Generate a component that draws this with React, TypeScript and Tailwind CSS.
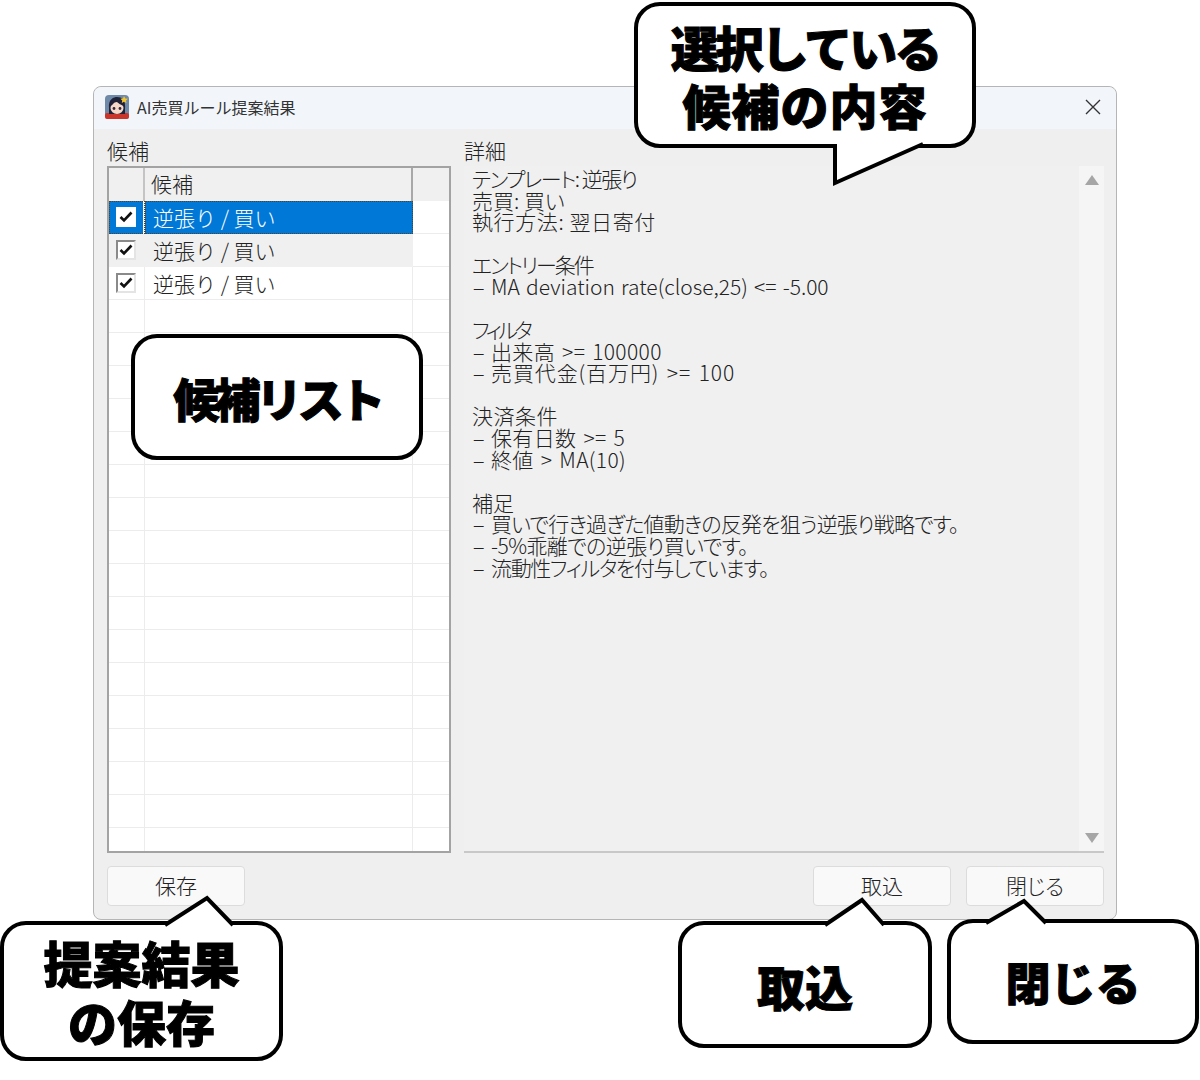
import React from "react";

const sans = "font-['Noto_Sans_CJK_JP','Noto_Sans',sans-serif]";
const palt = "[font-feature-settings:'palt']";

const detail: { t: string; c?: string }[] = [
  { t: "テンプレート: 逆張り", c: "tracking-[-1.5px]" },
  { t: "売買: 買い" },
  { t: "執行方法: 翌日寄付", c: "tracking-[0.6px]" },
  { t: "" },
  { t: "エントリー条件", c: "tracking-[-2px]" },
  { t: "- MA deviation rate(close,25) <= -5.00", c: "[word-spacing:1.5px]" },
  { t: "" },
  { t: "フィルタ", c: "tracking-[-3.5px]" },
  { t: "- 出来高 >= 100000", c: "tracking-[0.35px] [word-spacing:2px]" },
  { t: "- 売買代金(百万円) >= 100", c: "tracking-[0.9px] [word-spacing:2px]" },
  { t: "" },
  { t: "決済条件", c: "tracking-[0.5px]" },
  { t: "- 保有日数 >= 5", c: "tracking-[0.35px] [word-spacing:2px]" },
  { t: "- 終値 > MA(10)", c: "tracking-[0.35px] [word-spacing:2px]" },
  { t: "" },
  { t: "補足" },
  { t: "- 買いで行き過ぎた値動きの反発を狙う逆張り戦略です。", c: "tracking-[-0.8px]" },
  { t: "- -5%乖離での逆張り買いです。", c: "tracking-[-0.55px]" },
  { t: "- 流動性フィルタを付与しています。", c: "tracking-[-1.35px]" },
];

function DetailLine({ line }: { line: { t: string; c?: string } }) {
  if (line.t.startsWith("- ")) {
    return (
      <div className="h-[21.6px] whitespace-nowrap">
        <span className="inline-block w-[19px] origin-left scale-x-[1.9]">-</span>
        <span className={line.c ?? ""}>{line.t.slice(2)}</span>
      </div>
    );
  }
  return <div className={"h-[21.6px] whitespace-nowrap " + (line.c ?? "")}>{line.t}</div>;
}

function Check({ selected }: { selected?: boolean }) {
  return (
    <span
      className={
        selected
          ? "flex h-[20px] w-[20px] items-center justify-center bg-white"
          : "flex h-[20px] w-[20px] -translate-x-[1px] items-center justify-center border-2 border-[#8a8a8a] border-r-[#e4e4e4] border-b-[#e4e4e4] bg-white"
      }
    >
      <svg width="14" height="12" viewBox="0 0 14 12">
        <path d="M1.5 6 L5 9.5 L12.5 1.5" fill="none" stroke="#111" strokeWidth="2.6" />
      </svg>
    </span>
  );
}

function Row({ index }: { index: number }) {
  const hasData = index < 3;
  const selected = index === 0;
  const middleClass = selected
    ? "bg-[#0078d7] text-white outline-dotted outline-1 outline-[#5a4020] -outline-offset-1"
    : index === 1
      ? "bg-[#f0f0f0] text-[#222]"
      : "border-r border-[#ececec] text-[#222]";
  return (
    <div className="grid h-[33px] grid-cols-[36px_268px_36px] border-b border-[#ececec] text-[21px] font-light leading-[33px]">
      <div
        className={
          selected
            ? "flex items-center justify-center border-r-2 border-white bg-[#0078d7] outline-dotted outline-1 outline-[#5a4020] -outline-offset-1"
            : index === 1
              ? "flex items-center justify-center border-r border-[#f0f0f0] bg-[#f0f0f0]"
              : "flex items-center justify-center border-r border-[#ececec]"
        }
      >
        {hasData && <Check selected={selected} />}
      </div>
      <div className={"whitespace-nowrap pl-[8px] " + (hasData ? middleClass : "border-r border-[#ececec]")}>
        {hasData ? "逆張り / 買い" : ""}
      </div>
      <div />
    </div>
  );
}

function Button({ label }: { label: string }) {
  return (
    <button className={"flex h-[40px] w-[138px] items-center justify-center rounded-[4px] border border-[#dcdcdc] bg-[#f9f9f9] text-[21px] font-light text-[#222] " + palt}>
      {label}
    </button>
  );
}

function AppIcon() {
  return (
    <svg width="24" height="24" viewBox="0 0 24 24" className="shrink-0">
      <rect width="24" height="24" rx="4" fill="#6f89a8" />
      <rect y="18" width="24" height="6" rx="2" fill="#c9352b" />
      <path d="M4 13 C3 4 9 2 12 2 C17 2 21 5 20 14 L20 19 L4 19 Z" fill="#1f2238" />
      <ellipse cx="12" cy="13" rx="6.5" ry="6" fill="#f6d8c8" />
      <path d="M5.5 11 C8 10 9 7 11 6 C13 8 16 10 18.5 11 L18 7 L12 4 L6 7 Z" fill="#1f2238" />
      <circle cx="9" cy="13.5" r="1.4" fill="#33263a" />
      <circle cx="15" cy="13.5" r="1.4" fill="#33263a" />
      <path d="M19 1 L20.3 3.4 L23 3.8 L21 5.6 L21.5 8 L19 6.8 L16.8 8 L17.2 5.6 L15.4 3.8 L18 3.4 Z" fill="#f3c52f" />
    </svg>
  );
}

type CalloutProps = {
  className: string;
  lines: { text: string; cls: string }[];
  tail?: { box: string; viewBox: string; points: string };
};

function Callout({ className, lines, tail }: CalloutProps) {
  return (
    <div className={"absolute flex flex-col items-center justify-center border-[4px] border-black bg-white text-black " + className}>
      {lines.map((l) => (
        <div key={l.text} className={"whitespace-nowrap font-black [-webkit-text-stroke:1px_black] " + l.cls}>
          {l.text}
        </div>
      ))}
      {tail && (
        <svg className={"absolute overflow-visible " + tail.box} viewBox={tail.viewBox}>
          <polygon points={tail.points} fill="#fff" />
          <polyline points={tail.points} fill="none" stroke="#000" strokeWidth="4" strokeLinejoin="miter" />
        </svg>
      )}
    </div>
  );
}

export default function App() {
  return (
    <div className={"relative h-[1080px] w-[1200px] overflow-hidden bg-white pl-[93px] pt-[86px] " + sans}>
      <div className="flex h-[834px] w-[1024px] flex-col rounded-[8px] border border-[#b5b5b5] bg-[#efefef]">
        {/* title bar */}
        <div className="flex h-[42px] shrink-0 items-center rounded-t-[8px] bg-[#f2f6fb] pb-[3px] pl-[11px] pr-[15px]">
          <AppIcon />
          <span className="ml-[8px] text-[16px] text-[#333]">AI売買ルール提案結果</span>
          <svg width="16" height="16" viewBox="0 0 16 16" className="ml-auto">
            <path d="M1 1 L15 15 M15 1 L1 15" stroke="#333" strokeWidth="1.4" />
          </svg>
        </div>

        {/* panels */}
        <div className="flex min-h-0 flex-1 gap-[13px] pl-[13px] pr-[12px]">
          <div className="flex w-[344px] shrink-0 flex-col">
            <div className="h-[37px] pt-[7px] text-[21px] font-light leading-[28px] text-[#222]">候補</div>
            <div className="h-[689px] overflow-hidden border-2 border-[#a3a3a3] bg-white">
              <div className="grid h-[33px] grid-cols-[36px_268px_36px] bg-[#f0f0f0] text-[21px] font-light leading-[30px] text-[#222]">
                <div className="border-r-2 border-[#c4c4c4]" />
                <div className="border-r-2 border-[#a8a8a8] pl-[6px]">候補</div>
                <div />
              </div>
              {Array.from({ length: 20 }, (_, i) => (
                <Row key={i} index={i} />
              ))}
            </div>
          </div>

          <div className="flex min-w-0 flex-1 flex-col">
            <div className="h-[37px] pt-[7px] text-[21px] font-light leading-[28px] text-[#222]">詳細</div>
            <div className="flex h-[689px] border-b-2 border-[#c8c8c8] bg-[#f0f0f0]">
              <div className={"min-w-0 flex-1 pl-[8px] pt-[2px] text-[21px] font-light leading-[21.6px] text-[#222] " + palt}>
                {detail.map((line, i) => (
                  <DetailLine key={i} line={line} />
                ))}
              </div>
              <div className="flex w-[25px] shrink-0 flex-col items-center justify-between bg-[#f5f5f5] pb-[8px] pt-[9px]">
                <svg width="14" height="10" viewBox="0 0 14 10">
                  <path d="M7 0 L14 10 L0 10 Z" fill="#a6a6a6" />
                </svg>
                <svg width="14" height="10" viewBox="0 0 14 10">
                  <path d="M0 0 L14 0 L7 10 Z" fill="#a6a6a6" />
                </svg>
              </div>
            </div>
          </div>
        </div>

        {/* buttons */}
        <div className="flex h-[66px] shrink-0 items-start pl-[13px] pr-[12px] pt-[13px]">
          <Button label="保存" />
          <div className="ml-auto flex gap-[15px]">
            <Button label="取込" />
            <Button label="閉じる" />
          </div>
        </div>
      </div>

      {/* annotation callouts */}
      <Callout
        className="left-[634px] top-[2px] h-[146px] w-[342px] rounded-[26px] pb-[1px]"
        lines={[
          { text: "選択している", cls: "text-[48px] leading-[58px] tracking-[-3px]" },
          { text: "候補の内容", cls: "text-[48px] leading-[58px] tracking-[1px]" },
        ]}
        tail={{
          box: "left-[197px] top-[136px] h-[44px] w-[90px]",
          viewBox: "0 0 90 44",
          points: "0,2 0,41 88,2",
        }}
      />
      <Callout
        className="left-[131px] top-[334px] h-[126px] w-[292px] rounded-[26px]"
        lines={[{ text: "候補リスト", cls: "text-[46px] leading-[58px] tracking-[-4.5px]" }]}
      />
      <Callout
        className="left-0 top-[921px] h-[140px] w-[283px] rounded-[26px]"
        lines={[
          { text: "提案結果", cls: "text-[49px] leading-[59px]" },
          { text: "の保存", cls: "text-[49px] leading-[59px]" },
        ]}
        tail={{
          box: "left-[161px] top-[-28px] h-[32px] w-[70px]",
          viewBox: "0 0 70 32",
          points: "0,28 42,1 68,28",
        }}
      />
      <Callout
        className="left-[678px] top-[921px] h-[127px] w-[254px] rounded-[26px]"
        lines={[{ text: "取込", cls: "text-[48px] leading-[58px]" }]}
        tail={{
          box: "left-[143px] top-[-28px] h-[32px] w-[62px]",
          viewBox: "0 0 62 32",
          points: "0,28 37,3 59,28",
        }}
      />
      <Callout
        className="left-[947px] top-[919px] h-[125px] w-[252px] rounded-[26px]"
        lines={[{ text: "閉じる", cls: "text-[45px] leading-[58px]" }]}
        tail={{
          box: "left-[35px] top-[-26px] h-[30px] w-[64px]",
          viewBox: "0 0 64 30",
          points: "0,26 38,4 60,26",
        }}
      />
    </div>
  );
}
